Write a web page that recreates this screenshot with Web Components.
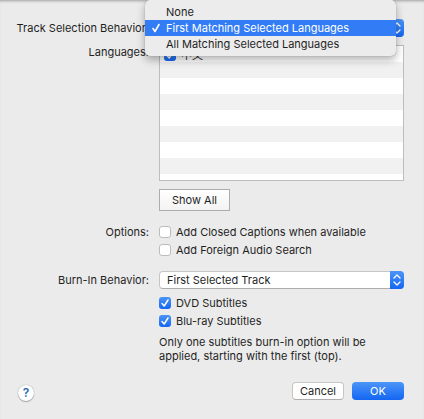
<!DOCTYPE html>
<html lang="en">
<head>
<meta charset="utf-8">
<meta name="viewport" content="width=device-width, initial-scale=1">
<title>Subtitle Selection Behavior</title>
<style>
	html { background: #ebebeb; }
	body {
		margin: 0;
		color: #1f1f1f;
		font: 11px/14px Inter, "Noto Sans CJK SC", sans-serif;
		--label-width: 133px;
		--gap: 10px;
		--blue: linear-gradient(#4b95f8, #1466f2);
	}
</style>
</head>
<body>
<selection-sheet>
	<popup-field label="Track Selection Behavior:" selected="1" open>
		<option>None</option>
		<option>First Matching Selected Languages</option>
		<option>All Matching Selected Languages</option>
	</popup-field>
	<language-list label="Languages:">
		<check-option checked>中文</check-option>
	</language-list>
	<option-group label="Options:">
		<check-option>Add Closed Captions when available</check-option>
		<check-option>Add Foreign Audio Search</check-option>
	</option-group>
	<popup-field label="Burn-In Behavior:" selected="0">
		<option>First Selected Track</option>
	</popup-field>
	<option-group class="burn">
		<check-option checked>DVD Subtitles</check-option>
		<check-option checked>Blu-ray Subtitles</check-option>
		<p slot="note">Only one subtitles burn-in option will be applied, starting with the first (top).</p>
	</option-group>
	<push-button slot="help" kind="help" name="Help">?</push-button>
	<push-button slot="actions">Cancel</push-button>
	<push-button slot="actions" kind="primary">OK</push-button>
</selection-sheet>

<script>
const rowCss = `
	:host {
		display: grid;
		grid-template-columns: var(--label-width) minmax(0, 1fr);
		column-gap: var(--gap);
	}
	.label {
		text-align: right;
		white-space: nowrap;
	}
`

class SelectionSheet extends HTMLElement {
	connectedCallback() {
		this.attachShadow({mode: "open"}).innerHTML = `
			<style>
				:host {
					display: block;
					padding: 19px 20px 18px 16px;
					box-shadow: inset 0 3px 3px -2px #a0a0a0;
				}
				::slotted(language-list) { margin-top: 8px; }
				::slotted(option-group) { margin-top: 12px; }
				::slotted(option-group.burn) { margin-top: 5px; }
				::slotted(popup-field:not([open])) { margin-top: 12px; }
				footer {
					display: flex;
					align-items: center;
					gap: 8px;
					margin-top: 18px;
				}
				.help {
					flex: 1;
					padding: 4px 0 0 2px;
				}
			</style>
			<main><slot></slot></main>
			<footer>
				<div class="help"><slot name="help"></slot></div>
				<slot name="actions"></slot>
			</footer>
		`
	}
}

class PopupField extends HTMLElement {
	connectedCallback() {
		const options = Array.from(this.querySelectorAll("option"))
		const selected = Number(this.getAttribute("selected"))
		this.attachShadow({mode: "open"}).innerHTML = `
			<style>
				${rowCss}
				:host {
					align-items: center;
					line-height: 18px;
				}
				:host([open]) {
					position: relative;
					z-index: 1;
				}
				.control {
					display: grid;
					grid-template-columns: minmax(0, 1fr) 14px;
					position: relative;
					height: 18px;
				}
				select {
					grid-area: 1 / 1 / 2 / 3;
					appearance: none;
					margin: 0;
					padding: 0 22px 0 7px;
					border: 1px solid #c6c6c6;
					border-bottom-color: #adadad;
					border-radius: 4px;
					background: white;
					color: inherit;
					font: inherit;
					line-height: 16px;
				}
				svg.arrows {
					grid-area: 1 / 2;
					width: 14px;
					height: 18px;
					border-radius: 0 4px 4px 0;
					background: var(--blue);
					pointer-events: none;
				}
				.menu {
					position: absolute;
					top: -19px;
					left: -14px;
					right: 8px;
					padding: 4px 0;
					border-radius: 5px;
					background: #ececec;
					box-shadow: 0 0 1px #777, 0 4px 9px rgb(0 0 0 / 30%);
				}
				.item {
					display: grid;
					grid-template-columns: 21px 1fr;
					align-items: center;
					width: 100%;
					height: 16px;
					padding: 0;
					border: 0;
					background: none;
					color: inherit;
					font: inherit;
					line-height: 16px;
					text-align: left;
				}
				.item span { grid-column: 2; }
				.item svg {
					grid-area: 1 / 1;
					justify-self: center;
				}
				.item[aria-selected="true"] {
					background: #327cf6;
					color: white;
				}
			</style>
			<label class="label" for="choice">${this.getAttribute("label")}</label>
			<div class="control">
				<select id="choice"></select>
				<svg class="arrows" viewBox="0 0 14 18" fill="none" stroke="white" stroke-width="1.3" stroke-linecap="round" stroke-linejoin="round">
					<path d="M4 7 7 4 10 7M4 11 7 14 10 11"></path>
				</svg>
			</div>
		`
		const select = this.shadowRoot.querySelector("select")
		select.append(...options)
		select.selectedIndex = selected
		if (this.hasAttribute("open"))
			this.shadowRoot.querySelector(".control").append(this.createMenu(select))
	}

	createMenu(select) {
		const menu = document.createElement("div")
		menu.className = "menu"
		menu.setAttribute("role", "listbox")
		menu.innerHTML = Array.from(select.options).map((option, i) => `
			<button type="button" class="item" role="option" aria-selected="${i === select.selectedIndex}">
				${i === select.selectedIndex ? `
					<svg width="10" height="10" viewBox="0 0 10 10" fill="none" stroke="white" stroke-width="1.6" stroke-linecap="round" stroke-linejoin="round">
						<path d="M2 5.5 4 8.5 8 1.5"></path>
					</svg>
				` : ""}
				<span>${option.text}</span>
			</button>
		`).join("")
		menu.querySelectorAll("button").forEach((button, i) => {
			button.addEventListener("click", () => {
				select.selectedIndex = i
				menu.remove()
			})
		})
		return menu
	}
}

class LanguageList extends HTMLElement {
	connectedCallback() {
		this.attachShadow({mode: "open"}).innerHTML = `
			<style>
				${rowCss}
				.list {
					box-sizing: border-box;
					height: 136px;
					padding: 1px 4px;
					border: 1px solid #bdbdbd;
					background: repeating-linear-gradient(white 0 16px, #f1f1f1 16px 32px);
					overflow: auto;
				}
				button {
					grid-column: 2;
					justify-self: start;
					height: 22px;
					margin-top: 8px;
					padding: 0 12px;
					border: 1px solid #adadad;
					background: linear-gradient(#fff, #f3f3f3);
					color: inherit;
					font: inherit;
				}
			</style>
			<span class="label" id="label">${this.getAttribute("label")}</span>
			<div class="list" role="group" aria-labelledby="label"><slot></slot></div>
			<button type="button">Show All</button>
		`
	}
}

class OptionGroup extends HTMLElement {
	connectedCallback() {
		this.attachShadow({mode: "open"}).innerHTML = `
			<style>
				${rowCss}
				:host { --option-height: 18px; }
				.label { line-height: 18px; }
				::slotted(p) {
					max-width: 220px;
					margin: 5px 0 0;
				}
			</style>
			<span class="label" id="label">${this.getAttribute("label") ?? ""}</span>
			<div role="group" aria-labelledby="label">
				<slot></slot>
				<slot name="note"></slot>
			</div>
		`
	}
}

class CheckOption extends HTMLElement {
	connectedCallback() {
		this.attachShadow({mode: "open"}).innerHTML = `
			<style>
				:host { display: block; }
				label {
					display: grid;
					grid-template-columns: 12px 1fr;
					column-gap: 5px;
					align-items: center;
					min-height: var(--option-height, 16px);
				}
				input {
					grid-area: 1 / 1;
					appearance: none;
					width: 12px;
					height: 12px;
					margin: 0;
					border: 1px solid #bcbcbc;
					border-radius: 3px;
					background: white;
				}
				input:checked {
					border: 0;
					background: var(--blue);
				}
				svg {
					grid-area: 1 / 1;
					visibility: hidden;
					pointer-events: none;
				}
				input:checked + svg { visibility: visible; }
			</style>
			<label>
				<input type="checkbox" ${this.hasAttribute("checked") ? "checked" : ""}>
				<svg width="12" height="12" viewBox="0 0 12 12" fill="none" stroke="white" stroke-width="1.5" stroke-linecap="round" stroke-linejoin="round">
					<path d="M3 6.5 5.2 9 9 3"></path>
				</svg>
				<span><slot></slot></span>
			</label>
		`
	}
}

class PushButton extends HTMLElement {
	connectedCallback() {
		const kind = this.getAttribute("kind") ?? "plain"
		const name = this.getAttribute("name")
		this.attachShadow({mode: "open"}).innerHTML = `
			<style>
				:host { display: block; }
				button {
					display: block;
					min-width: 52px;
					height: 18px;
					padding: 0 6px;
					border: 1px solid #c6c6c6;
					border-bottom-color: #adadad;
					border-radius: 4px;
					background: white;
					color: inherit;
					font: inherit;
				}
				.primary {
					border: 0;
					background: var(--blue);
					color: white;
				}
				.help {
					min-width: 0;
					width: 16px;
					height: 16px;
					padding: 0;
					border: 0;
					border-radius: 50%;
					box-shadow: 0 0 1px #888, 0 1px 1px #aaa;
					color: #2568ae;
					font-size: 12px;
					font-weight: 600;
				}
			</style>
			<button type="button" class="${kind}" ${name ? `aria-label="${name}"` : ""}><slot></slot></button>
		`
	}
}

customElements.define("selection-sheet", SelectionSheet)
customElements.define("popup-field", PopupField)
customElements.define("language-list", LanguageList)
customElements.define("option-group", OptionGroup)
customElements.define("check-option", CheckOption)
customElements.define("push-button", PushButton)
</script>
</body>
</html>
